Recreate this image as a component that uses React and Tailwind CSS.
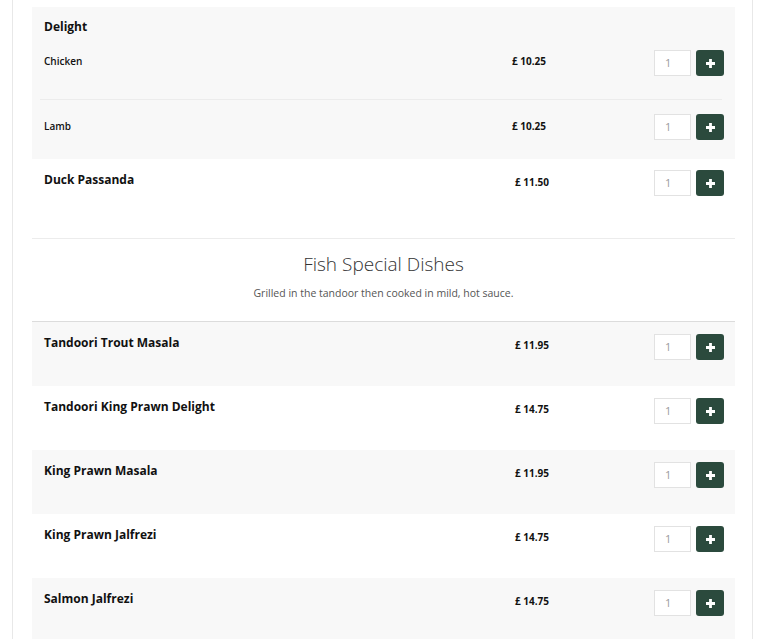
import React from "react";

const font = { fontFamily: '"Open Sans", "Liberation Sans", sans-serif' };

function AddControl() {
  return (
    <div className="flex items-center gap-[5px] shrink-0">
      <div className="w-[37px] h-[26px] bg-white border border-[#e2e2e2] text-[11px] leading-[24px] text-[#9a9a9a] pl-[10px]">
        1
      </div>
      <button className="w-[28px] h-[26px] rounded-[3px] bg-[#2b4a3d] flex items-center justify-center">
        <svg width="11" height="11" viewBox="0 0 11 11">
          <path d="M5.5 1v9M1 5.5h9" stroke="white" strokeWidth="2.8" strokeLinecap="butt" />
        </svg>
      </button>
    </div>
  );
}

function SubRow({ name, price, padTop, textPad }) {
  return (
    <div className={`flex items-start pl-[12px] pr-[11px] ${padTop}`}>
      <div className={`w-[468px] text-[10px] font-semibold leading-[18px] text-[#111] ${textPad}`}>{name}</div>
      <div className={`w-[142px] text-[10px] font-bold leading-[18px] text-[#111] ${textPad}`}>{price}</div>
      <AddControl />
    </div>
  );
}

function DishRow({ name, price, grey }) {
  return (
    <div className={`flex items-start h-[64px] pl-[12px] pr-[11px] pt-[12px] ${grey ? "bg-[#f8f8f8]" : "bg-white"}`}>
      <div className="w-[468px] text-[12px] font-bold leading-[18px] text-[#111]">{name}</div>
      <div className="w-[142px] pl-[3px] text-[10px] font-bold leading-[18px] text-[#111] pt-[2px]">{price}</div>
      <AddControl />
    </div>
  );
}

export default function App() {
  const fish = [
    ["Tandoori Trout Masala", "£ 11.95"],
    ["Tandoori King Prawn Delight", "£ 14.75"],
    ["King Prawn Masala", "£ 11.95"],
    ["King Prawn Jalfrezi", "£ 14.75"],
    ["Salmon Jalfrezi", "£ 14.75"],
  ];
  return (
    <div style={font} className="bg-white w-[761px] h-[639px] overflow-hidden">
      <div className="ml-[12px] w-[741px] min-h-[700px] border-x border-[#e8e8e8] pl-[19px] pr-[17px] pt-[7px]">
        {/* Delight with its variants */}
        <div className="bg-[#f8f8f8] h-[152px]">
          <div className="pl-[12px] pt-[11px] h-[28px] text-[12px] font-bold leading-[18px] text-[#111]">Delight</div>
          <div className="h-[64px]">
            <SubRow name="Chicken" price="£ 10.25" padTop="pt-[15px]" textPad="pt-[2px]" />
          </div>
          <div className="h-px bg-[#ececec] ml-[8px] mr-[13px]" />
          <div className="h-[59px]">
            <SubRow name="Lamb" price="£ 10.25" padTop="pt-[14px]" textPad="pt-[3px]" />
          </div>
        </div>

        <div className="flex items-start h-[79px] pl-[12px] pr-[11px] pt-[11px]">
          <div className="w-[468px] text-[12px] font-bold leading-[18px] text-[#111] pt-[1px]">Duck Passanda</div>
          <div className="w-[142px] pl-[3px] text-[10px] font-bold leading-[18px] text-[#111] pt-[3px]">£ 11.50</div>
          <AddControl />
        </div>

        <div className="h-px bg-[#ececec]" />

        {/* Fish section header */}
        <div className="h-[82px] flex flex-col items-center">
          <h2 className="mt-[12px] text-[19px] font-light leading-[26px] text-[#333]">Fish Special Dishes</h2>
          <p className="mt-[8px] text-[10.5px] leading-[16px] text-[#555]">Grilled in the tandoor then cooked in mild, hot sauce.</p>
        </div>
        <div className="h-px bg-[#dcdcdc]" />

        {fish.map(([n, p], i) => (
          <DishRow key={n} name={n} price={p} grey={i % 2 === 0} />
        ))}
      </div>
    </div>
  );
}
